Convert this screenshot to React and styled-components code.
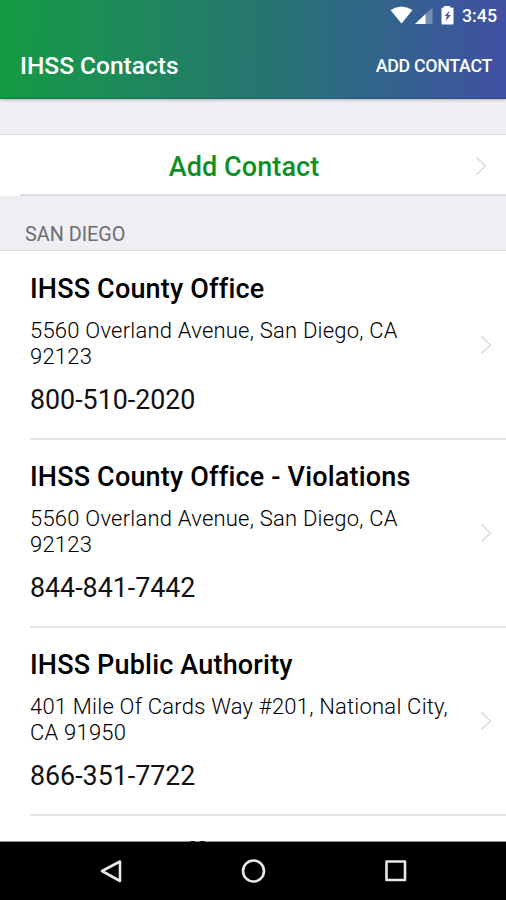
import React from "react";
import styled, { createGlobalStyle } from "styled-components";

const GlobalStyle = createGlobalStyle`
  * { box-sizing: border-box; }
  body { margin: 0; background: #fff; font-family: Roboto, sans-serif; }
`;

const Screen = styled.div`
  width: 506px;
  height: 900px;
  display: flex;
  flex-direction: column;
  overflow: hidden;
  background: #efeef3;
`;

const Header = styled.header`
  flex: none;
  height: 99px;
  background:
    linear-gradient(rgba(0, 40, 80, 0.3), rgba(0, 40, 80, 0.3)) 0 98px / 100% 1px no-repeat,
    linear-gradient(92deg, #149b43 0%, #1c8c58 22%, #26776f 50%, #33628f 78%, #4150a3 100%);
  box-shadow: 0 1px 3px rgba(0, 0, 0, 0.25);
  color: #fff;
`;

const StatusBar = styled.div`
  height: 32px;
  padding-right: 9px;
  display: flex;
  align-items: center;
  justify-content: flex-end;
`;

const StatusIcons = styled.svg`
  display: block;
  margin-right: 6px;
`;

const Clock = styled.span`
  font-size: 17.8px;
  font-weight: 500;
  line-height: 32px;
`;

const TitleBar = styled.div`
  height: 66px;
  padding: 0 14px 0 20px;
  display: flex;
  align-items: center;
  justify-content: space-between;
`;

const Title = styled.h1`
  margin: 0;
  padding-top: 1px;
  font-size: 24.5px;
  font-weight: 500;
  line-height: 66px;
`;

const HeaderAction = styled.span`
  font-size: 17.8px;
  font-weight: 500;
  letter-spacing: -0.3px;
`;

const Content = styled.main`
  flex: 1;
  min-height: 0;
  overflow: hidden;
  padding-top: 35px;
`;

const AddRow = styled.div`
  height: 62px;
  display: grid;
  grid-template-columns: 487px;
  align-items: center;
  background: linear-gradient(#dedde1, #dedde1) 20px 100% / 486px 2px no-repeat, #fff;
  border-top: 1px solid #dddce0;
`;

const AddLabel = styled.span`
  grid-area: 1 / 1;
  justify-self: center;
  padding: 2px 0 0 1px;
  font-size: 27px;
  font-weight: 500;
  letter-spacing: 0.1px;
  line-height: 60px;
  color: #0e9027;
`;

const ChevronIcon = styled.svg`
  grid-area: ${(p) => (p.$inAction ? "1 / 1" : "auto")};
  justify-self: end;
  flex: none;
  display: block;
`;

const SectionHeading = styled.div`
  height: 55px;
  padding: 27px 25px 0;
  border-bottom: 1px solid #dddce0;
  font-size: 19.8px;
  line-height: 23px;
  color: #6d6d72;
`;

const List = styled.div`
  padding-top: 1px;
  background: #fff;
`;

const ContactRow = styled.article`
  height: 188px;
  margin-left: 30px;
  padding-right: 14px;
  display: flex;
  align-items: center;
  justify-content: space-between;
  border-bottom: 2px solid #e4e4e6;
`;

const Details = styled.div`
  width: 430px;
  height: 186px;
  padding-top: 20px;
`;

const Name = styled.h2`
  margin: 0;
  font-size: 27px;
  font-weight: 500;
  letter-spacing: 0.18px;
  line-height: 34px;
  white-space: nowrap;
  color: #000;
`;

const Address = styled.div`
  margin-top: 12px;
  font-size: 22px;
  font-weight: 300;
  letter-spacing: 0.22px;
  line-height: 26px;
  white-space: pre-line;
  color: #000;
`;

const Phone = styled.div`
  margin-top: 13px;
  font-size: 26.8px;
  line-height: 34px;
  color: #111;
`;

const NavBar = styled.nav`
  position: relative;
  flex: none;
  height: 58px;
  padding-left: 2px;
  box-shadow: 0 -1px 0 rgba(0, 0, 0, 0.45);
  display: flex;
  justify-content: center;
  align-items: center;
  gap: 117px;
  background: #000;
`;

const NavIcon = styled.svg`
  display: block;
  fill: none;
  stroke: #e8e8e8;
  stroke-width: 2.6;
  stroke-linejoin: round;
`;

const contacts = [
  { name: "IHSS County Office", address: "5560 Overland Avenue, San Diego, CA\n92123", phone: "800-510-2020" },
  { name: "IHSS County Office - Violations", address: "5560 Overland Avenue, San Diego, CA\n92123", phone: "844-841-7442" },
  { name: "IHSS Public Authority", address: "401 Mile Of Cards Way #201, National City,\nCA 91950", phone: "866-351-7722" },
  { name: "Payment Staff", address: "", phone: "" },
];

function Chevron({ inAction }) {
  return (
    <ChevronIcon $inAction={inAction} width="12" height="20" viewBox="0 0 12 20">
      <path d="M1.500 1.500 10.500 10 1.500 18.500" fill="none" stroke="#d5d5d8" strokeWidth="1.2" />
    </ChevronIcon>
  );
}

export default function App() {
  return (
    <Screen>
      <GlobalStyle />
      <Header>
        <StatusBar>
          <StatusIcons width="66" height="22" viewBox="0 0 66 22">
            <path d="M0.500 5Q11.500 -2 22.500 5L11.500 18.500Z" fill="#fff" />
            <path d="M42.500 2.500V19H25Z" fill="#fff" opacity="0.3" />
            <path d="M35.500 9V19H25Z" fill="#fff" />
            <path d="M54 2.500V1H60V2.500H62.500Q63.500 2.500 63.500 3.500V18.500Q63.500 19.500 62.500 19.500H52.500Q51.500 19.500 51.500 18.500V3.500Q51.500 2.500 52.500 2.500Z" fill="#fff" />
            <path d="M60 5.500 54.500 11H57L55.500 16 61 10H58Z" fill="#3a5b97" />
          </StatusIcons>
          <Clock>3:45</Clock>
        </StatusBar>
        <TitleBar>
          <Title>IHSS Contacts</Title>
          <HeaderAction>ADD CONTACT</HeaderAction>
        </TitleBar>
      </Header>
      <Content>
        <AddRow>
          <AddLabel>Add Contact</AddLabel>
          <Chevron inAction />
        </AddRow>
        <SectionHeading>SAN DIEGO</SectionHeading>
        <List>
          {contacts.map((c) => (
            <ContactRow key={c.name}>
              <Details>
                <Name>{c.name}</Name>
                <Address>{c.address}</Address>
                <Phone>{c.phone}</Phone>
              </Details>
              <Chevron />
            </ContactRow>
          ))}
        </List>
      </Content>
      <NavBar>
        <NavIcon width="24" height="26" viewBox="0 0 24 26">
          <path d="M21 3.500V23L3 13Z" />
        </NavIcon>
        <NavIcon width="26" height="26" viewBox="0 0 26 26">
          <circle cx="13.500" cy="13" r="10.500" />
        </NavIcon>
        <NavIcon width="26" height="26" viewBox="0 0 26 26">
          <rect x="3.500" y="3.500" width="18.500" height="18.500" />
        </NavIcon>
      </NavBar>
    </Screen>
  );
}
